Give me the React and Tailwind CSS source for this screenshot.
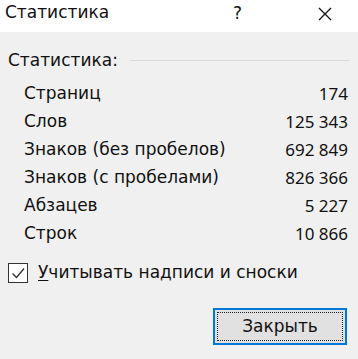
import React from "react";

const rows = [
  { label: "Страниц", value: "174" },
  { label: "Слов", value: "125 343" },
  { label: "Знаков (без пробелов)", value: "692 849" },
  { label: "Знаков (с пробелами)", value: "826 366" },
  { label: "Абзацев", value: "5 227" },
  { label: "Строк", value: "10 866" },
];

const App = () => {
  return (
    <div
      className="w-[358px] h-[359px] bg-[#f0f0f0] text-[#111] flex flex-col overflow-hidden"
      style={{ fontFamily: '"DejaVu Sans", "Noto Sans", sans-serif' }}
    >
      {/* заголовок окна */}
      <div className="h-[32px] bg-white flex items-start justify-between pl-[5px] pr-[26px] pt-[1px]">
        <span className="text-[17px] leading-[22px]">Статистика</span>
        <div className="flex items-center gap-[76px] pt-[1px]">
          <span className="text-[17px] leading-[22px]">?</span>
          <svg width="14" height="14" viewBox="0 0 14 14" className="mt-[1px]">
            <path d="M1 1 L13 13 M13 1 L1 13" stroke="#111" strokeWidth="1.3" fill="none" />
          </svg>
        </div>
      </div>

      <div className="flex flex-col px-[8px]">
        <div className="flex items-center gap-[12px] mt-[15px] h-[26px]">
          <span className="text-[17px] leading-[26px]">Статистика:</span>
          <div className="flex-1 h-px bg-[#dadada] mr-[1px]" />
        </div>

        <div className="flex flex-col pl-[16px] pr-[2px] mt-[7px]">
          {rows.map((row) => (
            <div key={row.label} className="flex justify-between h-[28px] items-center text-[17px]">
              <span>{row.label}</span>
              <span style={{ fontFamily: '"Noto Sans", sans-serif' }}>{row.value}</span>
            </div>
          ))}
        </div>

        <label className="flex items-center gap-[10px] mt-[14px] h-[22px] text-[17px]">
          <span className="w-[20px] h-[20px] border border-[#333] bg-white flex items-center justify-center">
            <svg width="16" height="16" viewBox="0 0 16 16">
              <path d="M2.5 8.5 L6.5 12.5 L14 3.5" stroke="#333" strokeWidth="1.4" fill="none" />
            </svg>
          </span>
          <span>
            <span className="underline underline-offset-2">У</span>читывать надписи и сноски
          </span>
        </label>

        <div className="flex justify-end mt-[24px] pr-[3px]">
          <button className="w-[134px] h-[37px] border-2 border-[#0078d7] bg-[#e1e1e1] p-[2px]">
            <div className="w-full h-full border border-dotted border-[#222] flex items-center justify-center text-[17px]">
              Закрыть
            </div>
          </button>
        </div>
      </div>
    </div>
  );
};

export default App;
